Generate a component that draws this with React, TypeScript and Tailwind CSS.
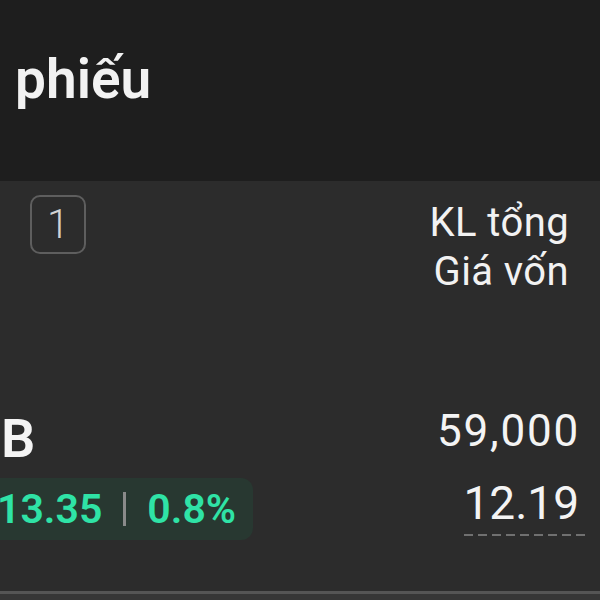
import React from "react";

export default function App() {
  return (
    <div
      className="w-[600px] h-[600px] overflow-hidden bg-[#2c2c2c] flex flex-col text-white"
      style={{ fontFamily: "Roboto, 'Noto Sans', sans-serif" }}
    >
      <div className="h-[181px] shrink-0 bg-[#1e1e1e] pt-[51px] pl-[15px]">
        <div className="text-[55px] leading-[56px] font-semibold text-[#f2f2f2]">phiếu</div>
      </div>
      <div className="h-[410px] shrink-0 flex justify-between">
        <div className="flex flex-col items-start">
          <div className="mt-[14px] ml-[30px] w-[56px] h-[59px] rounded-[10px] border-2 border-[#5e5e5e] flex items-center justify-center text-[40px] leading-[40px] font-light text-[#d2d2d2]">
            1
          </div>
          <div className="mt-[158px] ml-[1px] text-[54px] leading-[54px] font-semibold text-[#f4f4f4]">B</div>
          <div className="mt-[12px] h-[62px] pr-[17px] pl-0 rounded-r-[12px] bg-[#283831] flex items-center">
            <span className="-ml-[3px] text-[41px] leading-[46px] font-semibold text-[#2fe3a6]">13.35</span>
            <span className="mx-[21px] w-[3px] h-[34px] bg-[#8a8a8a]"></span>
            <span className="text-[41px] leading-[46px] font-semibold text-[#2fe3a6]">0.8%</span>
          </div>
        </div>
        <div className="flex flex-col items-end">
          <div className="mt-[17px] mr-[31px] text-right text-[40px] leading-[49px] tracking-[0.4px] text-[#f2f2f2]">
            <div>KL tổng</div>
            <div>Giá vốn</div>
          </div>
          <div className="mt-[113px] mr-[20px] text-[44px] leading-[44px] tracking-[1.8px] text-[#f4f4f4]">59,000</div>
          <div className="mt-[27px] mr-[15px] flex flex-col items-end">
            <div className="pr-[6px] text-[46px] leading-[46px] text-[#f4f4f4]">12.19</div>
            <div className="mt-[8px] w-[121px] h-[2px] bg-[repeating-linear-gradient(90deg,#707070_0px,#707070_9px,transparent_9px,transparent_14px)]"></div>
          </div>
        </div>
      </div>
      <div className="h-[3px] shrink-0 bg-[#555555]"></div>
      <div className="flex-1 bg-[#363636]"></div>
    </div>
  );
}
